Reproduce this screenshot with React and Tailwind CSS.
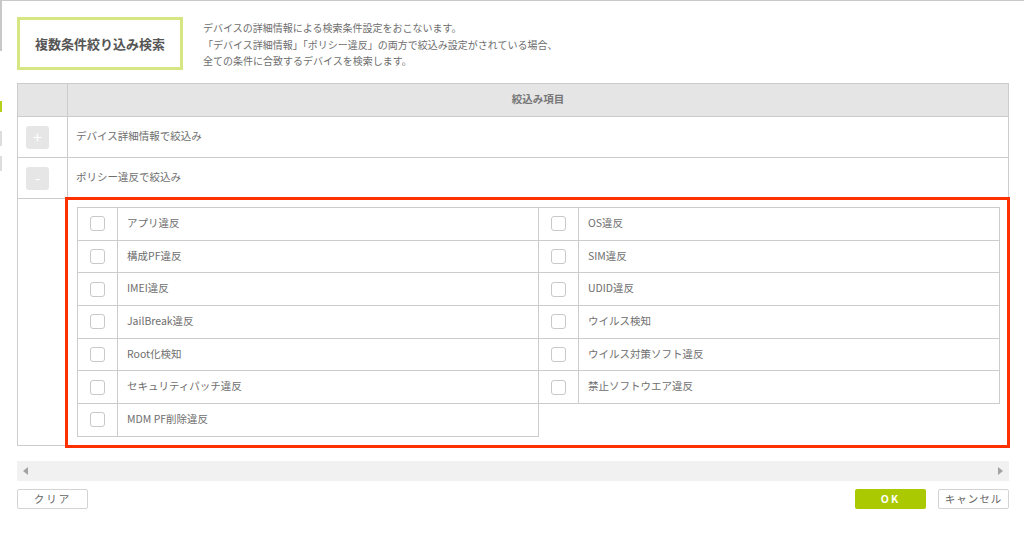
import React from 'react'

const LEFT = ['アプリ違反', '構成PF違反', 'IMEI違反', 'JailBreak違反', 'Root化検知', 'セキュリティパッチ違反', 'MDM PF削除違反']
const RIGHT = ['OS違反', 'SIM違反', 'UDID違反', 'ウイルス検知', 'ウイルス対策ソフト違反', '禁止ソフトウエア違反']

function CheckRow({ label }) {
  return (
    <div className="flex h-[32.7px] border-b border-[#cccccc]">
      <div className="w-[40px] shrink-0 border-r border-[#cccccc] flex items-center justify-center">
        <span className="w-[15px] h-[15px] rounded-[3px] border border-[#c9c9c9] bg-white" />
      </div>
      <div className="flex items-center pl-[9px] pb-[2px] text-[10.5px] text-[#6e6e6e]">{label}</div>
    </div>
  )
}

function CheckGrid({ items, className }) {
  return (
    <div className={`w-[462px] border-t border-l border-r border-[#cccccc] self-start ${className || ''}`}>
      {items.map((t) => <CheckRow key={t} label={t} />)}
    </div>
  )
}

function ToggleButton({ sign }) {
  return (
    <span className="w-[23px] h-[23px] rounded-[3px] bg-[#e6e6e6] text-white text-[16px] leading-none flex items-center justify-center pb-[2px]">
      {sign}
    </span>
  )
}

export default function App() {
  return (
    <div
      className="relative w-[1024px] h-[550px] bg-white border-t border-[#c8c8c8] text-[#6e6e6e] overflow-hidden"
      style={{ fontFamily: '"Noto Sans CJK JP", "Noto Sans", sans-serif' }}
    >
      {/* edge of the window behind */}
      <div className="absolute left-0 top-0 w-[2px] flex flex-col">
        <span className="h-[50px] bg-[#c8c8c8]" />
        <span className="h-[50px]" />
        <span className="h-[11px] bg-[#b5cf1a]" />
        <span className="h-[19px]" />
        <span className="h-[15px] bg-[#dddddd]" />
        <span className="h-[10px]" />
        <span className="h-[15px] bg-[#dddddd]" />
      </div>

      <div className="pl-[17px] pr-[15px] pt-[16px]">
        {/* heading */}
        <div className="flex">
          <div className="w-[166px] h-[53px] border-[3px] border-[#d6e682] flex items-center justify-center text-[13px] font-bold text-[#555]">
            複数条件絞り込み検索
          </div>
          <div className="ml-[20px] pt-[3px] text-[10px] leading-[16.5px] text-[#6e6e6e]">
            <p>デバイスの詳細情報による検索条件設定をおこないます。</p>
            <p>「デバイス詳細情報」「ポリシー違反」の両方で絞込み設定がされている場合、</p>
            <p>全ての条件に合致するデバイスを検索します。</p>
          </div>
        </div>

        {/* filter table */}
        <div className="mt-[13px] w-[992px] border border-[#cccccc]">
          <div className="flex h-[33px] bg-[#e5e5e5] border-b border-[#cccccc]">
            <div className="w-[50px] shrink-0 border-r border-[#cccccc]" />
            <div className="flex-1 flex items-center justify-center pb-[2px] text-[10.5px] font-bold text-[#777]">絞込み項目</div>
          </div>
          <div className="flex h-[41px] border-b border-[#cccccc]">
            <div className="w-[50px] shrink-0 border-r border-[#cccccc] flex items-center pl-[8px]">
              <ToggleButton sign="+" />
            </div>
            <div className="flex-1 flex items-center pl-[8px] pb-[2px] text-[10.5px]">デバイス詳細情報で絞込み</div>
          </div>
          <div className="flex h-[41px] border-b border-[#cccccc]">
            <div className="w-[50px] shrink-0 border-r border-[#cccccc] flex items-center pl-[8px]">
              <ToggleButton sign="-" />
            </div>
            <div className="flex-1 flex items-center pl-[8px] pb-[2px] text-[10.5px]">ポリシー違反で絞込み</div>
          </div>
          <div className="flex">
            <div className="w-[50px] shrink-0 border-r border-[#cccccc]" />
            <div className="relative flex-1 flex pl-[9px] pt-[8px] pb-[8px]">
              <CheckGrid items={LEFT} />
              <CheckGrid items={RIGHT} className="-ml-px" />
              <div className="absolute -left-[3px] -top-[2px] -right-[2px] -bottom-[3px] border-[3px] border-[#ff3000] pointer-events-none" />
            </div>
          </div>
        </div>

        {/* horizontal scrollbar */}
        <div className="mt-[15px] w-[992px] h-[20px] bg-[#f1f1f1] flex items-center justify-between px-[6px]">
          <span className="w-0 h-0 border-y-[4px] border-y-transparent border-r-[5px] border-r-[#a3a3a3]" />
          <span className="w-0 h-0 border-y-[4px] border-y-transparent border-l-[5px] border-l-[#a3a3a3]" />
        </div>

        {/* actions */}
        <div className="mt-[8px] w-[992px] flex items-center">
          <button className="w-[71px] h-[20px] border border-[#d3d3d3] rounded-[2px] bg-white text-[10.5px] tracking-[2px] text-[#666]">クリア</button>
          <button className="ml-auto w-[71px] h-[20px] rounded-[2px] bg-[#abc900] text-white text-[10.5px] font-bold tracking-[2px]">OK</button>
          <button className="ml-[12px] w-[71px] h-[20px] border border-[#d3d3d3] rounded-[2px] bg-white text-[10.5px] tracking-[1px] text-[#666]">キャンセル</button>
        </div>
      </div>
    </div>
  )
}
